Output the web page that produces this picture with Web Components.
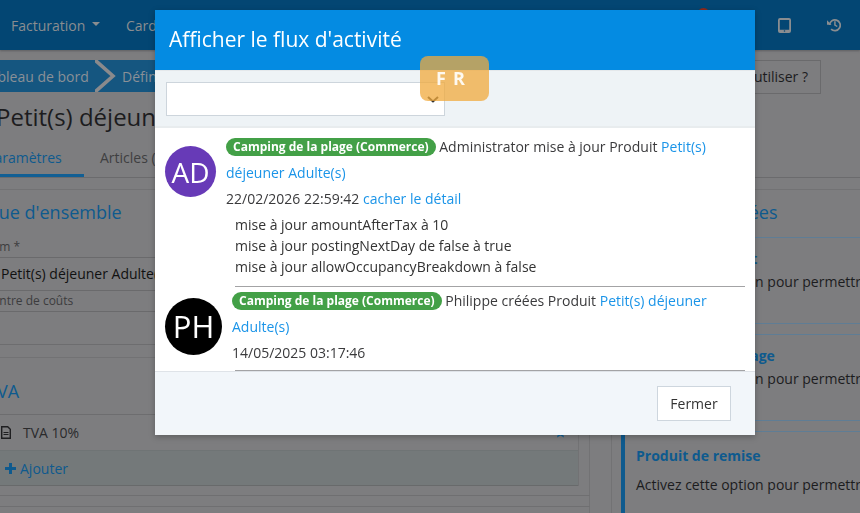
<!DOCTYPE html>
<html lang="fr">
<head>
<meta charset="utf-8">
<title>Flux d'activité</title>
<style>
html,body{margin:0;padding:0;height:100%;overflow:hidden}
body{font-family:"Open Sans",sans-serif;font-size:14px;color:#1c1c1e;background:#7d7d7f}
</style>
</head>
<body>
<app-page>
  <app-navbar></app-navbar>
  <app-crumbs></app-crumbs>
  <app-head></app-head>
  <app-main></app-main>
</app-page>
<app-modal heading="Afficher le flux d'activité">
  <activity-entry initials="AD" color="#673ab7" size="51" pad="61" top="18" tpad="6" who="Administrator mise à jour Produit" link="Petit(s) déjeuner Adulte(s)" when="22/02/2026 22:59:42" toggle="cacher le détail">
    <div>mise à jour amountAfterTax à 10</div>
    <div>mise à jour postingNextDay de false à true</div>
    <div>mise à jour allowOccupancyBreakdown à false</div>
  </activity-entry>
  <activity-entry initials="PH" color="#000" size="57" pad="67" top="11" tpad="1" who="Philippe créées Produit" link="Petit(s) déjeuner Adulte(s)" when="14/05/2025 03:17:46"></activity-entry>
</app-modal>
<lang-badge></lang-badge>
<script>
function def(name, html, init){
  customElements.define(name, class extends HTMLElement{
    constructor(){super();this.attachShadow({mode:'open'}).innerHTML=html;}
    connectedCallback(){ if(init) init.call(this,this.shadowRoot); }
  });
}
def('app-page',`<style>:host{display:block;width:860px;height:513px;overflow:hidden;background:#7d7d7f}</style><slot></slot>`);

def('app-navbar',`<style>
:host{display:flex;align-items:center;height:50px;background:#034673;box-shadow:0 1px 2px #5f5f61;color:#8a8d90;font-size:14px;padding-left:11px;box-sizing:border-box;position:relative}
.car{display:inline-block;border:4px solid transparent;border-top-color:#8a8d90;border-bottom:0;margin:0 0 2px 7px}
.f{display:flex;align-items:center;width:115px}
.icons{margin-left:auto;display:flex;align-items:center;gap:36px;padding-right:19px}
.dot{position:absolute;left:697px;top:8px;width:13px;height:13px;border-radius:50%;background:#8f2a1c}
svg{display:block}
</style>
<span class="f">Facturation<i class="car"></i></span><span>Cardex</span><i class="dot"></i>
<span class="icons">
<svg width="13" height="15" viewBox="0 0 13 15"><path fill="#8a8d90" fill-rule="evenodd" d="M2 0h9a2 2 0 0 1 2 2v11a2 2 0 0 1-2 2H2a2 2 0 0 1-2-2V2a2 2 0 0 1 2-2zm-.2 2v9.7h9.4V2zM6.5 12.2a.8.8 0 1 0 0 1.6.8.8 0 0 0 0-1.6z"/></svg>
<svg width="14" height="14" viewBox="0 0 16 16"><path fill="none" stroke="#8a8d90" stroke-width="2" d="M2.9 8a6.1 6.1 0 1 1 1.8 4.6"/><path fill="#8a8d90" d="M0 2.6 5.2 7.6H0zM8.2 3.8h1.7v3.8l2.3 1.4-.9 1.4-3.1-1.9z"/></svg>
</span>`);

def('app-crumbs',`<style>
:host{display:flex;height:34px;margin-top:10px;font-size:14px;position:relative}
.bar{display:flex;height:32px;align-items:center;background:#155680;color:#8a9097;width:500px;flex:none}
.a{margin-left:-18px;width:113px;flex:none;white-space:nowrap}
svg{flex:none;margin-right:6px}
.b{white-space:nowrap}
.btn{margin-left:auto;margin-right:39px;border:1px solid #6a6a6c;height:32px;line-height:32px;padding:0 12px;color:#1c1c1e;white-space:nowrap}
</style>
<div class="bar"><span class="a">Tableau de bord</span><svg width="21" height="32" viewBox="0 0 21 32"><path d="M0 0 18 16 0 32" fill="none" stroke="#8a8a8c" stroke-width="3.6"/></svg><span class="b">Définitions</span></div>
<div class="btn">Comment utiliser ?</div>`);

def('app-head',`<style>
:host{display:block;height:95px;overflow:hidden}
h1{margin:5px 0 0 -4px;font:400 24px/36px "Open Sans",sans-serif;color:#1c1c1e;white-space:nowrap}
nav{display:flex;height:36px;margin-top:6px;border-bottom:1px solid #6b6b6d;box-sizing:content-box;width:860px;font-size:14px;line-height:34px;color:#3f3f41}
.on{width:84px;box-sizing:border-box;border-bottom:3px solid #125f94;color:#0e5a8e;height:36px;text-indent:-14px;white-space:nowrap;overflow:visible;margin-right:16px}
</style>
<h1>Petit(s) déjeuner Adulte(s)</h1>
<nav><div class="on">Paramètres</div><div>Articles (0)</div></nav>`);

def('app-main',`<style>
:host{display:flex;border-top:1px solid #727274;height:324px;width:860px;overflow:hidden}
.left{width:589px;flex:none;border-right:1px solid #727274;display:flex;flex-direction:column}
.right{margin-left:21px;border-left:1px solid #727274;flex:1;min-width:0;display:flex;flex-direction:column}
h2{margin:0;font:400 18px/24px "Open Sans",sans-serif;color:#0e5a8e;white-space:nowrap}
.ov{height:155px;flex:none;border-bottom:1px solid #6d6d6f;box-sizing:border-box;padding-top:10px}
.ov h2{margin-left:-12px}
.lab{font-size:12px;line-height:16px;color:#3c3c3e;white-space:nowrap}
.l1{margin-top:15px;height:18px;border-bottom:1px solid #6a6a6c;text-indent:-17px}
.val{height:32px;line-height:32px;border-bottom:1px solid #6a6a6c;text-indent:1px;color:#111;white-space:nowrap}
.l2{height:20px;line-height:20px;text-indent:-15px;border-bottom:1px solid #6a6a6c}
.tva{margin-top:12px;width:578px;border-right:1px solid #727274;border-top:1px solid #727274;flex:none}
.tva h2{height:57px;padding-top:21px;margin-left:-13px;border-bottom:1px solid #6d6d6f;box-sizing:border-box}
.row{height:35px;display:flex;align-items:center;gap:10px;padding-left:1px;color:#2a2a2c}
.add{height:34px;background:#74797a;border-top:1px solid #6f7475;border-bottom:1px solid #686a6b;display:flex;align-items:center;color:#0e5a8e;padding-left:4px;gap:3px}
.rowwrap{position:relative}
.pin{position:absolute;left:555px;top:12px}
.bot{height:10px;border-top:1px solid #6f6f71;margin-top:9px;width:590px;flex:none}
.bot2{border-top:1px solid #6f6f71;width:590px;flex:none}
.hd{height:48px;flex:none;padding:10px 0 0 17px;box-sizing:border-box;border-bottom:1px solid #5f7d95}
.card{padding:9px 0 0 24px;height:86px;flex:none;box-sizing:border-box;border-bottom:1px solid #5f7d95;white-space:nowrap}
.card b{display:block;color:#0e5a8e;line-height:24px;font-weight:700}
.card span{display:block;line-height:22px;color:#1c1c1e}
.sp{height:10px;flex:none;border-bottom:1px solid #5f7d95}
.card.act{border-left:4px solid #0e5a8e;margin-left:9px;padding:12px 0 0 11px;height:90px;border-bottom:0}
.card.act span{margin-top:6px}
</style>
<div class="left">
  <div class="ov">
    <h2>Vue d'ensemble</h2>
    <div class="lab l1">Nom *</div>
    <div class="val">Petit(s) déjeuner Adulte(s)</div>
    <div class="lab l2">Centre de coûts</div>
  </div>
  <div class="tva">
    <h2>TVA</h2>
    <div class="rowwrap">
    <div class="row"><svg width="10" height="13" viewBox="0 0 10 13"><path fill="none" stroke="#1f1f21" stroke-width="1.4" d="M.7.7h6l2.6 2.6v9H.7z"/><path stroke="#1f1f21" d="M2.5 6.5h5M2.5 8.5h5"/></svg><span style="margin-left:2px">TVA 10%</span></div>
    <svg class="pin" width="11" height="11" viewBox="0 0 11 11"><path fill="#125f94" d="M5.5 0 7 3.8l4 .3-3 2.6 1 3.9-3.5-2.1L2 10.6l1-3.9-3-2.6 4-.3z"/></svg>
    </div>
    <div class="add"><svg width="13" height="13" viewBox="0 0 13 13"><path fill="none" stroke="#0e5a8e" stroke-width="3" d="M6.5 1v11M1 6.5h11"/></svg>Ajouter</div>
  </div>
  <div class="bot"></div>
  <div class="bot2"></div>
</div>
<div class="right">
  <div class="hd"><h2>Options avancées</h2></div>
  <div class="card"><b>Produit de circuit</b><span>Activez cette option pour permettre</span></div>
  <div class="sp"></div>
  <div class="card"><b>Produit de stockage</b><span>Activez cette option pour permettre</span></div>
  <div class="sp"></div>
  <div class="card act"><b>Produit de remise</b><span>Activez cette option pour permettre</span></div>
</div>`);

def('app-modal',`<style>
:host{display:flex;flex-direction:column;position:fixed;left:155px;top:10px;width:600px;height:425px;background:#fff;box-shadow:0 2px 6px rgba(0,0,0,.25);color:#3a3a3c;font-family:"Open Sans",sans-serif}
header{height:60px;background:#048be2;color:#fff;font-size:21px;line-height:58px;padding-left:14px;flex:none}
.filter{height:58px;box-sizing:border-box;background:#eef3f6;border-top:1px solid #e4e8eb;border-bottom:2px solid #e8ecee;padding:11px 0 0 11px;flex:none}
.sel{width:279px;height:34px;box-sizing:border-box;background:#fff;border:1px solid #cdd5dc;position:relative}
.sel svg{position:absolute;left:260px;top:13px}
.body{height:243px;box-sizing:border-box;overflow:hidden;padding:0 10px;flex:none}
footer{flex:1;background:#f2f6fa;border-top:1px solid #dfe3e8;display:flex;justify-content:flex-end;align-items:flex-start;padding:14px 24px 0 0}
button{width:74px;height:35px;background:#fff;border:1px solid #ced6de;font:14px "Open Sans",sans-serif;color:#333;padding:0}
</style>
<header id="h"></header>
<div class="filter"><div class="sel"><svg width="12" height="7" viewBox="0 0 12 7"><path d="M1 1l5 4.5L11 1" fill="none" stroke="#333" stroke-width="2"/></svg></div></div>
<div class="body"><slot></slot></div>
<footer><button>Fermer</button></footer>`,function(r){r.getElementById('h').textContent=this.getAttribute('heading');});

def('activity-entry',`<style>
:host{display:flex;position:relative;box-sizing:border-box;font-size:14px;line-height:26px;color:#3a3a3c}
.av{flex:none;border-radius:50%;color:#fff;display:flex;align-items:center;justify-content:center;line-height:1}
.tx{flex:1;min-width:0}
.pill{display:inline-block;background:#43a047;color:#fff;font-weight:700;font-size:12px;line-height:18px;height:18px;padding:0 7px;border-radius:9px;vertical-align:1px}
a{color:#1a94e8;text-decoration:none}
.det{margin:2px 0 0 9px;line-height:21px;color:#333}
hr{margin:9px 0 0 9px;border:0;border-top:1px solid #a3a3a5;height:0}
</style>
<div class="av" id="av"></div>
<div class="tx" id="tx"><span class="pill">Camping de la plage (Commerce)</span> <span id="who"></span> <a href="#" id="lk"></a><div id="w"></div><div class="det"><slot></slot></div><hr></div>`,
function(r){
  const s=+this.getAttribute('size'), av=r.getElementById('av');
  av.textContent=this.getAttribute('initials');
  av.style.cssText+=`width:${s}px;height:${s}px;font-size:${Math.round(s*.55)}px;background:${this.getAttribute('color')};margin:${this.getAttribute('top')}px ${+this.getAttribute('pad')-s}px 0 0;`;
  r.getElementById('tx').style.paddingTop=this.getAttribute('tpad')+'px';
  r.getElementById('who').textContent=this.getAttribute('who');
  r.getElementById('lk').textContent=this.getAttribute('link');
  const w=r.getElementById('w'); w.textContent=this.getAttribute('when')+' ';
  if(this.getAttribute('toggle')){const a=document.createElement('a');a.href='#';a.textContent=this.getAttribute('toggle');w.append(a);}
  if(!this.children.length){r.querySelector('.det').style.display='none';const h=r.querySelector('hr');h.style.margin='4px 0 0 3px';}
  else this.style.marginBottom='0';
});

def('lang-badge',`<style>
:host{position:fixed;left:420px;top:56px;width:69px;height:45px;border-radius:8px;background:rgba(240,170,60,.75);color:rgba(255,255,255,.9);font:700 18px/44px "Open Sans",sans-serif;box-sizing:border-box;padding-left:16px;white-space:nowrap;overflow:hidden}
span{display:inline-block;width:17px}
</style><span>F</span><span>R</span>`);
</script>
</body>
</html>
